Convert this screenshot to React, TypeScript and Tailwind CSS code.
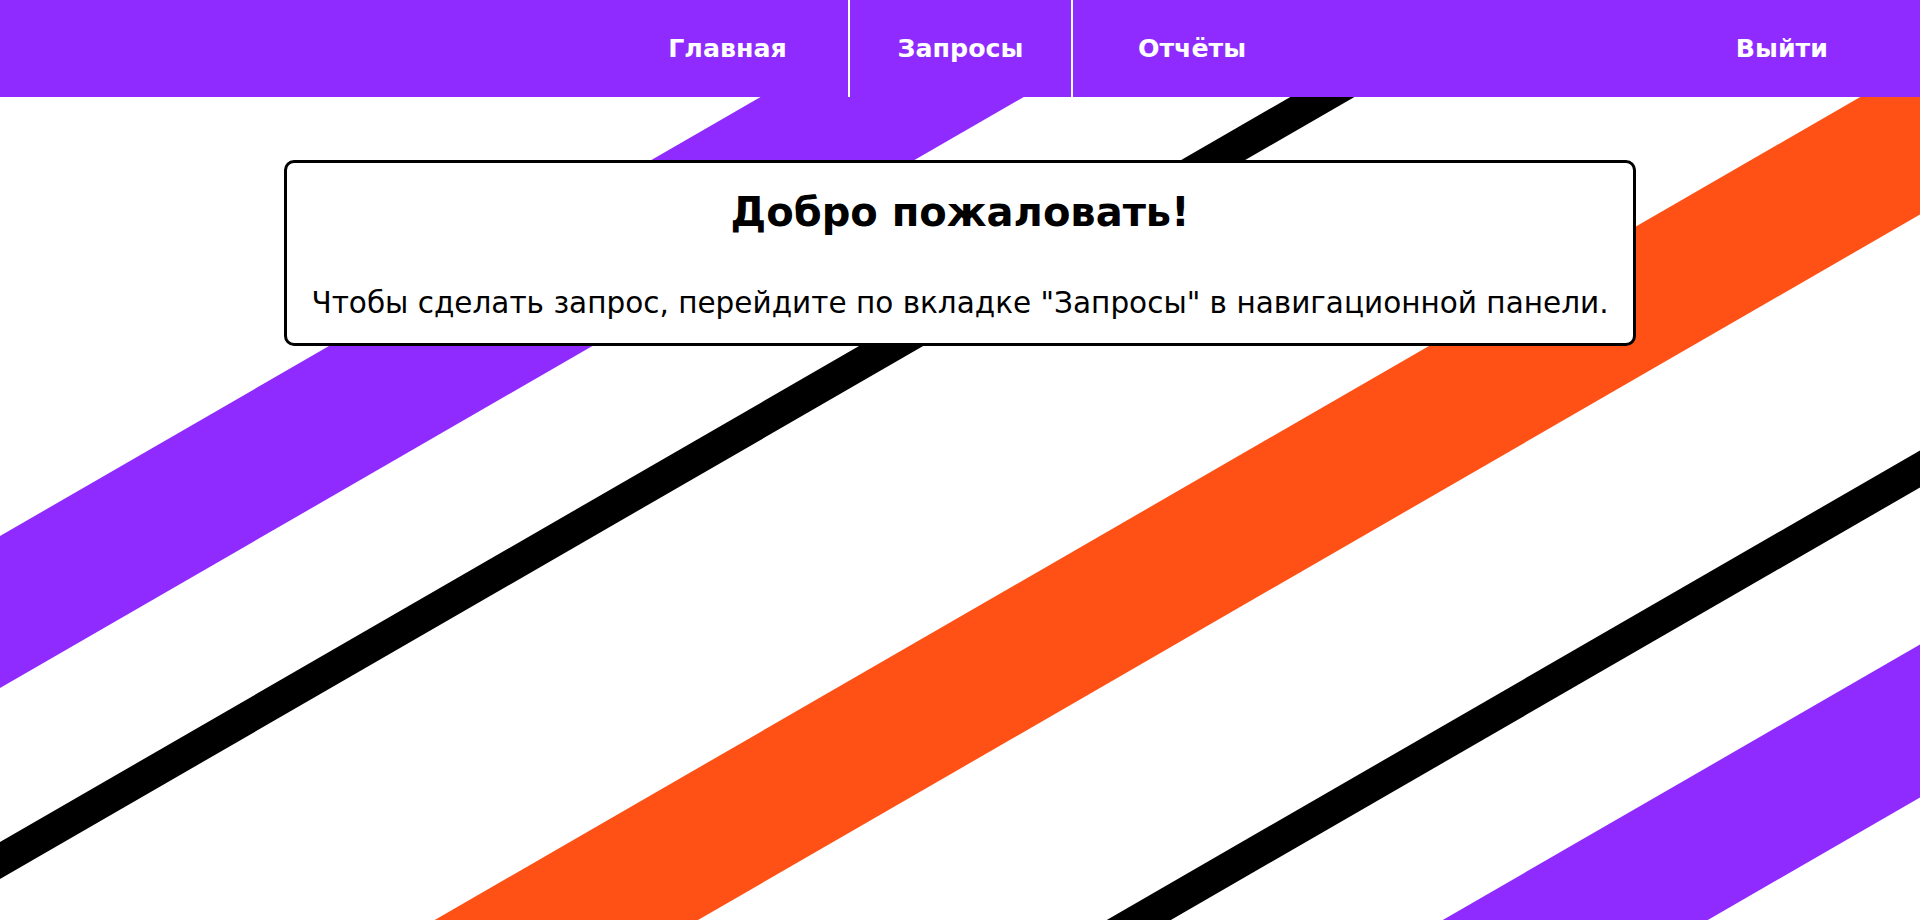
function Stripes() {
  // bands at 30deg: y + tan30 * x = c, each band is [c1, c2]
  const k = 1.7320508;
  const bands: [number, number, string][] = [
    [536, 688, "#8f2bff"],
    [842, 879, "#000000"],
    [1171, 1323, "#ff5115"],
    [1559, 1596, "#000000"],
    [1753, 1906, "#8f2bff"],
  ];
  return (
    <svg
      className="absolute inset-0 h-full w-full"
      viewBox="0 0 1920 920"
      preserveAspectRatio="none"
    >
      {bands.map(([c1, c2, fill]) => (
        <polygon
          key={c1}
          points={`0,${c1} ${c1 * k},0 ${c2 * k},0 0,${c2}`}
          fill={fill}
        />
      ))}
    </svg>
  );
}

export default function App() {
  return (
    <div className="relative min-h-screen overflow-hidden bg-white font-['DejaVu_Sans',sans-serif]">
      <Stripes />
      <header className="relative z-10 flex h-[97px] bg-[#8f2bff] text-[25.3px] font-bold text-white">
        <nav className="ml-[607px] flex">
          <a href="#" className="flex w-[241px] items-center justify-center">
            Главная
          </a>
          <span className="w-[2px] bg-white" />
          <a href="#" className="flex w-[221px] items-center justify-center">
            Запросы
          </a>
          <span className="w-[2px] bg-white" />
          <a href="#" className="flex w-[238px] items-center justify-center">
            Отчёты
          </a>
        </nav>
        <a href="#" className="ml-auto mr-[92px] flex items-center">
          Выйти
        </a>
      </header>

      <main className="relative z-10 flex justify-center pt-[63px]">
        <div className="w-[1352px] rounded-[10px] border-[3px] border-black bg-white px-4 pb-[23px] pt-[26px] text-center text-black">
          <h1 className="text-[40px] font-bold leading-[46px]">Добро пожаловать!</h1>
          <p className="mt-[51px] text-[29.5px] leading-[34px]">
            Чтобы сделать запрос, перейдите по вкладке "Запросы" в навигационной панели.
          </p>
        </div>
      </main>
    </div>
  );
}
